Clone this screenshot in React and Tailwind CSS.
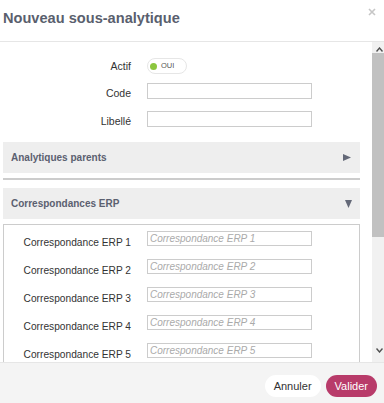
import React from 'react';

function Field({ label, children, labelClass = 'mt-[4px]' }) {
  return (
    <div className="flex items-start">
      <div className={`w-[128px] text-right text-[10.5px] leading-[12px] text-[#333333] ${labelClass}`}>{label}</div>
      <div className="ml-[16px] flex">{children}</div>
    </div>
  );
}

function SectionHeader({ title, open }) {
  return (
    <div className="h-[31px] bg-[#eeeeee] flex items-center justify-between pl-[8px] pr-[8px]">
      <span className="text-[10px] font-bold text-[#5b6070]">{title}</span>
      {open ? (
        <svg width="7" height="8" viewBox="0 0 7 8"><path d="M0 0 H7 L3.5 8 Z" fill="#646978" /></svg>
      ) : (
        <svg width="8" height="7" viewBox="0 0 8 7" className="mr-[1px]"><path d="M0 0 L8 3.5 L0 7 Z" fill="#646978" /></svg>
      )}
    </div>
  );
}

export default function App() {
  const erp = [1, 2, 3, 4, 5];
  return (
    <div className="w-[384px] h-[403px] bg-white flex flex-col overflow-hidden" style={{ fontFamily: '"Liberation Sans", Arial, sans-serif' }}>
      {/* header */}
      <div className="h-[42px] shrink-0 border-b border-[#e6e6e6] flex justify-between pl-[3px] pr-[8px]">
        <h1 className="pt-[10px] text-[14.6px] leading-[17px] font-bold text-[#5a5f6e]">Nouveau sous-analytique</h1>
        <svg width="8" height="8" viewBox="0 0 8 8" className="mt-[8px]">
          <path d="M1 1 L7 7 M7 1 L1 7" stroke="#c6c6c6" strokeWidth="1.6" />
        </svg>
      </div>

      {/* body */}
      <div className="h-[320px] shrink-0 flex">
        <div className="flex-1 overflow-hidden pl-[3px] pr-[12px]">
          <div className="pt-[16px] flex flex-col">
            <Field label="Actif" labelClass="mt-[2px]">
              <div className="w-[40px] h-[16px] rounded-full border border-[#e6e6e6] flex items-center pl-[2px]">
                <span className="w-[7px] h-[7px] rounded-full bg-[#8cc63f]" />
                <span className="ml-[4px] text-[7.5px] leading-[8px] text-[#555555]">OUI</span>
              </div>
            </Field>
            <div className="mt-[9px]">
              <Field label="Code">
                <input className="block w-[165px] h-[16px] border border-[#cccccc] outline-none" />
              </Field>
            </div>
            <div className="mt-[12px]">
              <Field label="Libellé">
                <input className="block w-[165px] h-[16px] border border-[#cccccc] outline-none" />
              </Field>
            </div>
          </div>

          <div className="mt-[15px]">
            <SectionHeader title="Analytiques parents" />
            <div className="mt-[5px] border-t border-b border-[#cccccc]" />
          </div>

          <div className="mt-[8px]">
            <SectionHeader title="Correspondances ERP" open />
            <div className="mt-[5px] border border-[#cccccc] pt-[6px]">
              {erp.map((n) => (
                <div key={n} className="h-[28px] flex items-start">
                  <div className="w-[127px] text-right text-[10.2px] leading-[12px] text-[#333333] mt-[5.5px]">Correspondance ERP {n}</div>
                  <input
                    placeholder={`Correspondance ERP ${n}`}
                    className="block ml-[16px] w-[165px] h-[15px] border border-[#cccccc] outline-none px-[2px] text-[10px] italic placeholder:text-[#aaaaaa]"
                  />
                </div>
              ))}
            </div>
          </div>
        </div>

        {/* scrollbar */}
        <div className="w-[12px] shrink-0 overflow-hidden bg-[#f1f1f1]">
          <div className="w-[15px] h-full flex flex-col">
            <div className="h-[10px] flex justify-center items-end">
              <svg width="7" height="5" viewBox="0 0 7 5"><path d="M0.5 4.5 L3.5 1 L6.5 4.5" fill="none" stroke="#505050" strokeWidth="1.4" /></svg>
            </div>
            <div className="mt-[1px] h-[184px] bg-[#c1c1c1]" />
            <div className="flex-1" />
            <div className="h-[14px] flex justify-center items-start">
              <svg width="7" height="5" viewBox="0 0 7 5"><path d="M0.5 0.5 L3.5 4 L6.5 0.5" fill="none" stroke="#505050" strokeWidth="1.4" /></svg>
            </div>
          </div>
        </div>
      </div>

      {/* footer */}
      <div className="flex-1 border-t border-[#e6e6e6] bg-[#f4f4f4] flex justify-end items-start pt-[12px] pr-[7px] gap-[5px]">
        <button className="h-[22px] px-[9px] rounded-full bg-white text-[11px] text-[#333333]">Annuler</button>
        <button className="h-[22px] px-[9px] rounded-full bg-[#b83b6a] text-[11px] text-white">Valider</button>
      </div>
    </div>
  );
}
